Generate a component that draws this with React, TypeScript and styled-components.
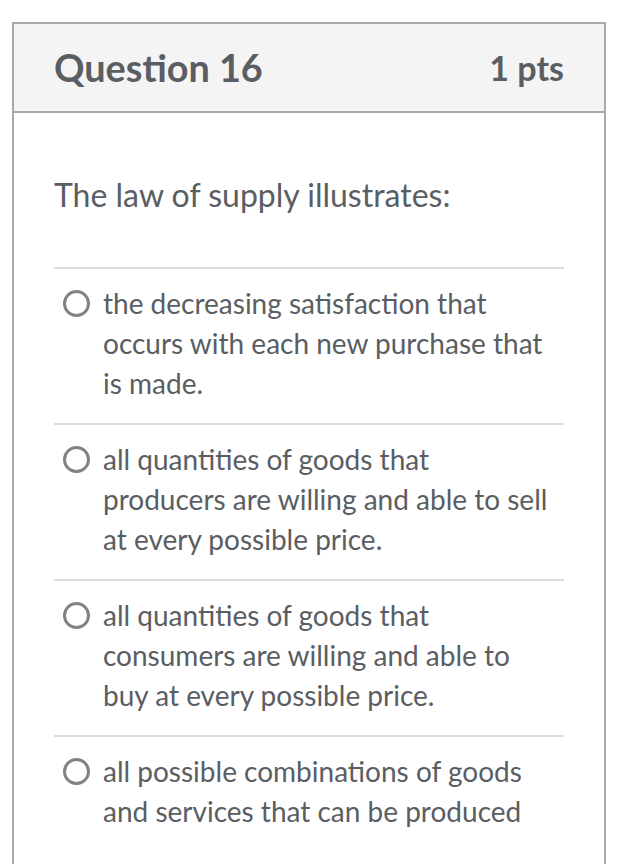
import React from "react";
import styled, { createGlobalStyle } from "styled-components";

const Global = createGlobalStyle`
  html, body { margin: 0; padding: 0; background: #ffffff; }
  body { font-family: Lato, "Open Sans", sans-serif; overflow: hidden; }
`;

const Page = styled.div`
  padding: 22px 38px 0 12px;
  height: 864px;
  box-sizing: border-box;
`;

const Card = styled.div`
  border: 2px solid #a9a9a9;
  border-bottom: none;
  min-height: 900px;
  box-sizing: border-box;
`;

const Header = styled.div`
  display: flex;
  justify-content: space-between;
  align-items: center;
  height: 87px;
  padding: 0 40px 0 40px;
  background: #f4f4f4;
  border-bottom: 2px solid #a9a9a9;
  color: #5a5e63;
  font-weight: 700;
`;

const Title = styled.div`
  font-size: 37.8px;
`;

const Points = styled.div`
  font-size: 34px;
`;

const Body = styled.div`
  padding: 62px 40px 0 40px;
`;

const Prompt = styled.div`
  font-size: 32px;
  color: #5a5e63;
  line-height: 40px;
  padding-bottom: 52px;
`;

const Answers = styled.div`
  display: flex;
  flex-direction: column;
`;

const Answer = styled.label`
  display: flex;
  align-items: flex-start;
  gap: 13px;
  border-top: 2px solid #dcdcdc;
  padding: 14px 0 20px 9px;
  color: #5a5e63;
  font-size: 28px;
  line-height: 40px;
`;

const Radio = styled.span`
  flex: none;
  width: 27px;
  height: 27px;
  margin-top: 7px;
  border: 3px solid #828282;
  border-radius: 50%;
  box-sizing: border-box;
  background: #fff;
`;

const AnswerText = styled.span`
  max-width: 452px;
`;

const answers = [
  "the decreasing satisfaction that occurs with each new purchase that is made.",
  "all quantities of goods that producers are willing and able to sell at every possible price.",
  "all quantities of goods that consumers are willing and able to buy at every possible price.",
  "all possible combinations of goods and services that can be produced",
];

export default function App() {
  return (
    <>
      <Global />
      <Page>
        <Card>
          <Header>
            <Title>Question 16</Title>
            <Points>1 pts</Points>
          </Header>
          <Body>
            <Prompt>The law of supply illustrates:</Prompt>
            <Answers>
              {answers.map((a) => (
                <Answer key={a}>
                  <Radio />
                  <AnswerText>{a}</AnswerText>
                </Answer>
              ))}
            </Answers>
          </Body>
        </Card>
      </Page>
    </>
  );
}
